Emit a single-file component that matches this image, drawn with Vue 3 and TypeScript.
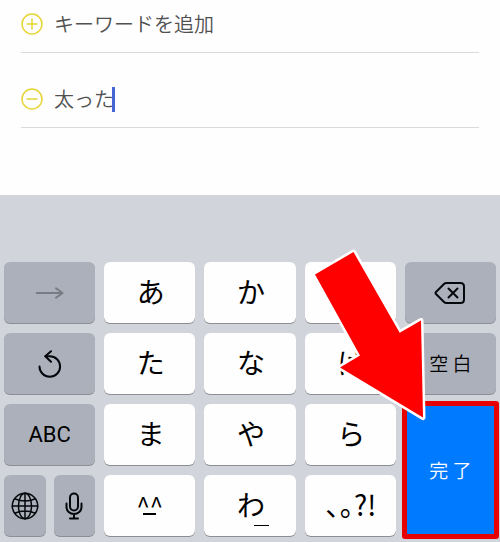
<script setup lang="ts">
import { computed, ref } from 'vue'

const keyword = ref<string>('太った')
const fieldWidth = computed(() => `${Math.max(keyword.value.length, 1)}em`)
</script>

<template>
  <main class="screen">
    <section class="list">
      <button type="button" class="row row-add">
        <svg class="sign" viewBox="0 0 22 22" aria-hidden="true">
          <circle cx="11" cy="11" r="10" />
          <path d="M5.5 11h11M11 5.500v11" />
        </svg>
        <span>キーワードを追加</span>
      </button>
      <div class="row row-edit">
        <button type="button" class="remove" aria-label="削除">
          <svg class="sign" viewBox="0 0 22 22" aria-hidden="true">
            <circle cx="11" cy="11" r="10" />
            <path d="M5.500 11h11" />
          </svg>
        </button>
        <div class="field">
          <input v-model="keyword" type="text" aria-label="キーワード" :style="{ width: fieldWidth }" />
          <span class="caret"></span>
        </div>
      </div>
    </section>

    <section class="keyboard">
      <button type="button" class="key dark" aria-label="次へ">
        <svg class="icon-next" viewBox="0 0 28 12" aria-hidden="true">
          <path d="M.5 6h26M20 1.300l6.500 4.700l-6.500 4.700" />
        </svg>
      </button>
      <button type="button" class="key kana">あ</button>
      <button type="button" class="key kana">か</button>
      <button type="button" class="key kana">さ</button>
      <button type="button" class="key dark" aria-label="削除">
        <svg class="icon-delete" viewBox="0 0 32 24" aria-hidden="true">
          <path d="M12.500 2H26.500Q30 2 30 5.500V18.500Q30 22 26.500 22H12.500Q11 22 10 21L2 13Q1 12 2 11L10 3Q11 2 12.500 2Z" />
          <path d="M14.500 7.500l9 9M23.500 7.500l-9 9" />
        </svg>
      </button>

      <button type="button" class="key dark" aria-label="戻す">
        <svg class="icon-undo" viewBox="0 0 24 28" aria-hidden="true">
          <path d="M1.500 16.500A10.300 10.300 0 1 0 11.800 6.200H7.500" />
          <path d="M13 1.200L7.300 6.200L13 11.700" />
        </svg>
      </button>
      <button type="button" class="key kana">た</button>
      <button type="button" class="key kana">な</button>
      <button type="button" class="key kana">は</button>
      <button type="button" class="key dark word">空 白</button>

      <button type="button" class="key dark latin">ABC</button>
      <button type="button" class="key kana">ま</button>
      <button type="button" class="key kana">や</button>
      <button type="button" class="key kana">ら</button>
      <div class="done-cell">
        <button type="button" class="done word">完 了</button>
        <span class="frame"></span>
        <svg class="pointer" viewBox="310 246 118 178" aria-hidden="true">
          <path d="M353.500 252L315 274.500L360 355.500L340 367.500L423 417.500L421 320.500L399.700 332.700Z" />
        </svg>
      </div>

      <div class="pair">
        <button type="button" class="key dark" aria-label="キーボードの切替">
          <svg class="icon-globe" viewBox="0 0 28 28" aria-hidden="true">
            <circle cx="14" cy="14" r="12.700" />
            <ellipse cx="14" cy="14" rx="6.500" ry="12.700" />
            <path d="M14 1.300v25.400M1.300 14h25.400M3.700 6.800q10.300 4.500 20.600 0M3.700 21.200q10.300 -4.500 20.600 0" />
          </svg>
        </button>
        <button type="button" class="key dark" aria-label="音声入力">
          <svg class="icon-mic" viewBox="0 0 18 28" aria-hidden="true">
            <rect x="5" y="1.500" width="8" height="17" rx="4" />
            <path d="M1.500 11.500v3.500a7.500 7 0 0 0 15 0v-3.500M9 22v4M5 26.500h8" />
          </svg>
        </button>
      </div>
      <button type="button" class="key face"><span>^^</span><span class="mouth"></span></button>
      <button type="button" class="key kana"><span class="wa">わ</span></button>
      <button type="button" class="key kana">､｡?!</button>
    </section>
  </main>
</template>

<style>
body {
  margin: 0;
  background: #d1d4da;
}
</style>

<style scoped>
.screen {
  font-family: "Noto Sans CJK JP", sans-serif;
  color: #000;
}

button {
  margin: 0;
  padding: 0;
  border: 0;
  background: none;
  font: inherit;
  color: inherit;
}

.list {
  padding: 0 21px 67px;
  background: #fefefe;
}

.row {
  display: flex;
  align-items: center;
  gap: 11px;
  box-sizing: border-box;
  width: 100%;
  border-bottom: 1px solid #dcdadb;
  font-size: 20px;
  font-weight: 350;
  line-height: 30px;
  color: #505050;
}

.row-add {
  padding: 9px 0 13px;
}

.row-edit {
  padding: 31px 0 13px;
}

.sign {
  display: block;
  width: 22px;
  height: 22px;
  fill: none;
  stroke: #e6d536;
  stroke-width: 1.5;
}

.field {
  display: flex;
  align-items: center;
}

.field input {
  height: 30px;
  padding: 0;
  border: 0;
  outline: 0;
  background: none;
  font: inherit;
  color: inherit;
}

.caret {
  width: 3px;
  height: 25px;
  margin-left: -2px;
  background: #4565d8;
}

.keyboard {
  display: grid;
  grid-template-columns: repeat(5, minmax(0, 1fr));
  grid-auto-rows: 61px;
  gap: 10px 9px;
  padding: 67px 4px 6px;
  background: #d1d4da;
}

.key {
  display: flex;
  align-items: center;
  justify-content: center;
  border-radius: 6px;
  background: #fefefe;
  box-shadow: 0 1px 0 #8c8e93;
}

.kana {
  padding: 0 0 4px 2px;
  font-size: 28px;
  line-height: 40px;
}

.dark {
  background: #abb0ba;
}

.word {
  padding-bottom: 2px;
  font-size: 19px;
  font-weight: 350;
}

.latin {
  font-family: Roboto, sans-serif;
  font-size: 22px;
}

.key svg {
  fill: none;
  stroke: #05070c;
  stroke-width: 2;
  stroke-linecap: round;
  stroke-linejoin: round;
}

.key .icon-next {
  width: 28px;
  height: 12px;
  stroke: #777b83;
}

.icon-delete {
  width: 32px;
  height: 24px;
}

.icon-undo {
  width: 24px;
  height: 28px;
}

.key .icon-globe {
  width: 28px;
  height: 28px;
  stroke-width: 1.5;
}

.icon-mic {
  width: 18px;
  height: 28px;
}

.pair {
  display: grid;
  grid-template-columns: 1fr 1fr;
  gap: 8px;
}

.face {
  flex-direction: column;
  font-size: 24px;
  line-height: 16px;
}

.mouth {
  width: 13px;
  height: 2px;
  background: #000;
}

.wa {
  position: relative;
}

.wa::after {
  content: "";
  position: absolute;
  right: -4px;
  bottom: -2px;
  width: 15px;
  height: 1px;
  background: #000;
}

.done-cell {
  position: relative;
  display: grid;
  grid-row: 3 / span 2;
  grid-column: 5;
}

.done {
  background: #007aff;
  color: #fff;
}

.frame {
  position: absolute;
  inset: -3px;
  border: 5px solid #e60000;
  border-radius: 3px;
  pointer-events: none;
}

.pointer {
  position: absolute;
  left: -95px;
  top: -158px;
  width: 118px;
  height: 178px;
  fill: #fe0000;
  stroke: #fff;
  stroke-width: 5;
  stroke-linejoin: round;
  paint-order: stroke;
  pointer-events: none;
}
</style>
